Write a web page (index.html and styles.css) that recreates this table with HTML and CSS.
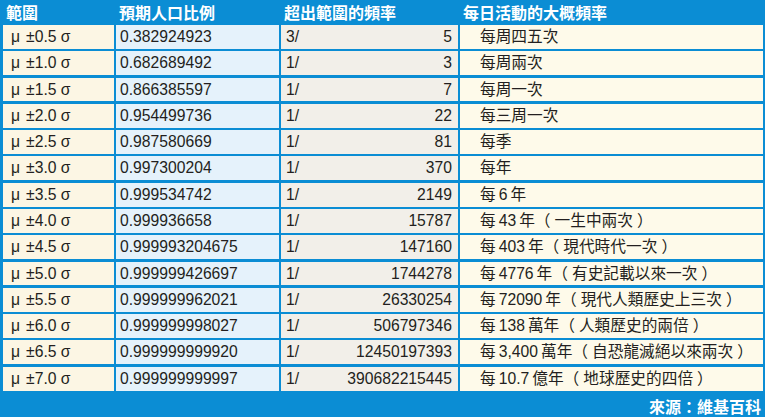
FILE: index.html
```html
<!DOCTYPE html>
<html lang="zh-Hant">
<head>
<meta charset="utf-8">
<title>常態分佈</title>
<link rel="stylesheet" href="styles.css">
</head>
<body>
<div class="board">
  <div class="grid">
    <div class="hd">範圍</div>
    <div class="hd">預期人口比例</div>
    <div class="hd">超出範圍的頻率</div>
    <div class="hd">每日活動的大概頻率</div>

    <div class="c1"><span class="mu">μ</span>±0.5 σ</div><div class="c2">0.382924923</div><div class="c3"><span>3/</span><span>5</span></div><div class="c4">每周四五次</div>
    <div class="c1"><span class="mu">μ</span>±1.0 σ</div><div class="c2">0.682689492</div><div class="c3"><span>1/</span><span>3</span></div><div class="c4">每周兩次</div>
    <div class="c1"><span class="mu">μ</span>±1.5 σ</div><div class="c2">0.866385597</div><div class="c3"><span>1/</span><span>7</span></div><div class="c4">每周一次</div>
    <div class="c1"><span class="mu">μ</span>±2.0 σ</div><div class="c2">0.954499736</div><div class="c3"><span>1/</span><span>22</span></div><div class="c4">每三周一次</div>
    <div class="c1"><span class="mu">μ</span>±2.5 σ</div><div class="c2">0.987580669</div><div class="c3"><span>1/</span><span>81</span></div><div class="c4">每季</div>
    <div class="c1"><span class="mu">μ</span>±3.0 σ</div><div class="c2">0.997300204</div><div class="c3"><span>1/</span><span>370</span></div><div class="c4">每年</div>
    <div class="c1"><span class="mu">μ</span>±3.5 σ</div><div class="c2">0.999534742</div><div class="c3"><span>1/</span><span>2149</span></div><div class="c4">每<span class="n">6</span>年</div>
    <div class="c1"><span class="mu">μ</span>±4.0 σ</div><div class="c2">0.999936658</div><div class="c3"><span>1/</span><span>15787</span></div><div class="c4">每<span class="n">43</span>年<span class="po">（</span>一生中兩次<span class="pc">）</span></div>
    <div class="c1"><span class="mu">μ</span>±4.5 σ</div><div class="c2">0.999993204675</div><div class="c3"><span>1/</span><span>147160</span></div><div class="c4">每<span class="n">403</span>年<span class="po">（</span>現代時代一次<span class="pc">）</span></div>
    <div class="c1"><span class="mu">μ</span>±5.0 σ</div><div class="c2">0.999999426697</div><div class="c3"><span>1/</span><span>1744278</span></div><div class="c4">每<span class="n">4776</span>年<span class="po">（</span>有史記載以來一次<span class="pc">）</span></div>
    <div class="c1"><span class="mu">μ</span>±5.5 σ</div><div class="c2">0.999999962021</div><div class="c3"><span>1/</span><span>26330254</span></div><div class="c4">每<span class="n">72090</span>年<span class="po">（</span>現代人類歷史上三次<span class="pc">）</span></div>
    <div class="c1"><span class="mu">μ</span>±6.0 σ</div><div class="c2">0.999999998027</div><div class="c3"><span>1/</span><span>506797346</span></div><div class="c4">每<span class="n">138</span>萬年<span class="po">（</span>人類歷史的兩倍<span class="pc">）</span></div>
    <div class="c1"><span class="mu">μ</span>±6.5 σ</div><div class="c2">0.999999999920</div><div class="c3"><span>1/</span><span>12450197393</span></div><div class="c4">每<span class="n">3,400</span>萬年<span class="po">（</span>自恐龍滅絕以來兩次<span class="pc">）</span></div>
    <div class="c1"><span class="mu">μ</span>±7.0 σ</div><div class="c2">0.999999999997</div><div class="c3"><span>1/</span><span>390682215445</span></div><div class="c4">每<span class="n">10.7</span>億年<span class="po">（</span>地球歷史的四倍<span class="pc">）</span></div>
  </div>
  <div class="foot">來源：維基百科</div>
</div>
</body>
</html>
```
FILE: styles.css
```css
html, body {
  margin: 0;
  padding: 0;
  background: #ffffff;
}

body {
  font-family: "Liberation Sans", "Noto Sans CJK TC", sans-serif;
  color: #231f20;
}

.board {
  width: 765px;
  height: 417px;
  background: #0b8dd4;
}

.grid {
  display: grid;
  grid-template-columns: 111px 163px 177px 303px;
  grid-template-rows: 22.6px;
  grid-auto-rows: 23.9px;
  column-gap: 2px;
  row-gap: 2.4px;
  padding-left: 3px;
  padding-right: 2px;
}

.grid > div {
  display: flex;
  align-items: center;
  font-size: 15.7px;
  line-height: 1;
  white-space: nowrap;
}

.grid > .hd {
  color: #ffffff;
  font-family: "Noto Sans CJK TC", sans-serif;
  font-weight: 700;
  font-size: 16px;
  padding-left: 3px;
  padding-top: 1px;
}

.c1 {
  background: #fcf6e4;
  padding-left: 8px;
}

.mu {
  margin-right: 6px;
}

.c2 {
  background: #e5f2fb;
  padding-left: 4px;
}

.grid > .c3 {
  background: #f2efe9;
  padding: 0 6px 0 5px;
  justify-content: space-between;
}

.c4 {
  background: #fefaea;
  padding-left: 20px;
}

.n {
  margin: 0 3px;
}

.po {
  margin-right: 4px;
}

.pc {
  margin-left: 4px;
}

.foot {
  height: 26px;
  margin-top: 2px;
  display: flex;
  align-items: center;
  justify-content: flex-end;
  padding-right: 4px;
  color: #ffffff;
  font-family: "Noto Sans CJK TC", sans-serif;
  font-weight: 700;
  font-size: 16px;
}
```
